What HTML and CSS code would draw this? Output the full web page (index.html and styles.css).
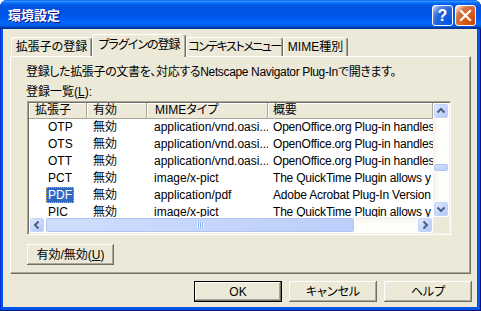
FILE: index.html
```html
<!DOCTYPE html>
<html lang="ja">
  <head>
    <meta charset="utf-8" />
    <title>環境設定</title>
    <link rel="stylesheet" href="styles.css">
  </head>
  <body>
    <div class="window">
      <div class="titlebar">
        <div class="title">環境設定</div>
        <div class="title-buttons">
          <div class="tb-btn tb-help">?</div>
          <div class="tb-btn tb-close">
            <svg width="21" height="21" viewBox="0 0 21 21"><path d="M6 6 L15 15 M15 6 L6 15" stroke="#fff" stroke-width="2.2" stroke-linecap="square"/></svg>
          </div>
        </div>
      </div>

      <div class="client">
        <div class="tabs">
          <div class="tab tab-1">拡張子の登録</div>
          <div class="tab tab-2 active">プラグインの登録</div>
          <div class="tab tab-3">コンテキストメニュー</div>
          <div class="tab tab-4">MIME種別</div>
        </div>

        <div class="panel">
          <p class="desc">登録した拡張子の文書を、対応するNetscape Navigator Plug-Inで開きます。</p>
          <p class="label">登録一覧(<u>L</u>):</p>

          <div class="listbox">
            <div class="lv">
              <div class="lv-row lv-head">
                <div class="cell">拡張子</div>
                <div class="cell">有効</div>
                <div class="cell">MIMEタイプ</div>
                <div class="cell">概要</div>
              </div>
              <div class="lv-row">
                <div class="cell ext"><span>OTP</span></div>
                <div class="cell">無効</div>
                <div class="cell">application/vnd.oasi...</div>
                <div class="cell">OpenOffice.org Plug-in handles</div>
              </div>
              <div class="lv-row">
                <div class="cell ext"><span>OTS</span></div>
                <div class="cell">無効</div>
                <div class="cell">application/vnd.oasi...</div>
                <div class="cell">OpenOffice.org Plug-in handles</div>
              </div>
              <div class="lv-row">
                <div class="cell ext"><span>OTT</span></div>
                <div class="cell">無効</div>
                <div class="cell">application/vnd.oasi...</div>
                <div class="cell">OpenOffice.org Plug-in handles</div>
              </div>
              <div class="lv-row">
                <div class="cell ext"><span>PCT</span></div>
                <div class="cell">無効</div>
                <div class="cell">image/x-pict</div>
                <div class="cell">The QuickTime Plugin allows y</div>
              </div>
              <div class="lv-row">
                <div class="cell ext"><span class="selected">PDF</span></div>
                <div class="cell">無効</div>
                <div class="cell">application/pdf</div>
                <div class="cell">Adobe Acrobat Plug-In Version</div>
              </div>
              <div class="lv-row">
                <div class="cell ext"><span>PIC</span></div>
                <div class="cell">無効</div>
                <div class="cell">image/x-pict</div>
                <div class="cell">The QuickTime Plugin allows y</div>
              </div>
            </div>

            <div class="vscroll">
              <div class="sb-btn">
                <svg width="14" height="14" viewBox="0 0 14 14"><polyline points="3.5,8.5 7,5 10.5,8.5" fill="none" stroke="#4d6185" stroke-width="2"/></svg>
              </div>
              <div class="sb-track v-track">
                <div class="sb-thumb v-thumb"></div>
              </div>
              <div class="sb-btn">
                <svg width="14" height="14" viewBox="0 0 14 14"><polyline points="3.5,5.5 7,9 10.5,5.5" fill="none" stroke="#4d6185" stroke-width="2"/></svg>
              </div>
            </div>

            <div class="hscroll">
              <div class="sb-btn">
                <svg width="14" height="14" viewBox="0 0 14 14"><polyline points="8.5,3.5 5,7 8.5,10.5" fill="none" stroke="#4d6185" stroke-width="2"/></svg>
              </div>
              <div class="sb-track h-track">
                <div class="sb-thumb h-thumb">
                  <div class="grip"></div>
                </div>
              </div>
              <div class="sb-btn">
                <svg width="14" height="14" viewBox="0 0 14 14"><polyline points="5.5,3.5 9,7 5.5,10.5" fill="none" stroke="#4d6185" stroke-width="2"/></svg>
              </div>
            </div>

            <div class="corner"></div>
          </div>

          <button class="btn toggle-btn">有効/無効(<u>U</u>)</button>
        </div>

        <div class="dialog-buttons">
          <button class="btn default">OK</button>
          <button class="btn">キャンセル</button>
          <button class="btn">ヘルプ</button>
        </div>
      </div>
    </div>
  </body>
</html>
```

FILE: styles.css
```css
* {
  box-sizing: border-box;
}

body {
  margin: 0;
  font: 12px/1 "Liberation Sans", "Noto Sans CJK JP", sans-serif;
  font-feature-settings: "palt";
  color: #000;
  background: #fff;
}

.window {
  width: 481px;
  height: 311px;
  display: flex;
  flex-direction: column;
  background: #0055e5;
  border-radius: 7px 7px 0 0;
  box-shadow: inset -1px -1px #00138c, inset 1px 0 #0831d9;
  overflow: hidden;
}

/* title bar */

.titlebar {
  height: 29px;
  display: flex;
  align-items: flex-start;
  padding: 0 5px 0 8px;
  background: linear-gradient(to bottom, #0058ee 0%, #3593ff 4%, #288eff 6%, #127dff 8%, #036ffc 10%, #0262ee 14%, #0057e5 20%, #0054e3 24%, #0055eb 56%, #005bf5 66%, #026afe 76%, #0062ef 86%, #0052d6 92%, #0040ab 94%, #003092 100%);
  border-radius: 7px 7px 0 0;
}

.title {
  margin-top: 7px;
  font: bold 13px/16px "Noto Sans CJK JP", sans-serif;
  color: #fff;
  text-shadow: 1px 1px #0f1089;
}

.title-buttons {
  margin-left: auto;
  margin-top: 5px;
  display: flex;
  gap: 2px;
}

.tb-btn {
  width: 21px;
  height: 21px;
  border: 1px solid #fff;
  border-radius: 3px;
  display: flex;
  align-items: center;
  justify-content: center;
}

.tb-help {
  background: radial-gradient(circle at 90% 90%, #0054e9 0%, #2263d5 55%, #4479e4 70%, #a3bbec 90%, #fff 100%);
  color: #fff;
  font: bold 16px/1 "Liberation Sans", sans-serif;
}

.tb-close {
  background: radial-gradient(circle at 90% 90%, #cc4600 0%, #dc6527 55%, #cd7546 70%, #ffccb2 90%, #fff 100%);
}

.tb-close svg {
  margin: -1px;
}

/* client area */

.client {
  flex: 1;
  margin: 0 4px 4px 3px;
  background: #ece9d8;
  display: flex;
  flex-direction: column;
}

.tabs {
  display: flex;
  align-items: flex-end;
  height: 22px;
  margin: 5px 0 0 8px;
}

.tab {
  height: 19px;
  display: flex;
  align-items: center;
  justify-content: center;
  background: #ece9d8;
  border: 1px solid;
  border-color: #fff #716f64 transparent #fff;
  border-bottom: none;
  border-radius: 3px 3px 0 0;
  box-shadow: inset -1px 0 #aca899;
  white-space: nowrap;
}

.tab.active {
  height: 23px;
  margin-bottom: -1px;
  padding-bottom: 3px;
  position: relative;
  z-index: 1;
}

.tab-1 { width: 81px; }
.tab-2 { width: 94px; letter-spacing: -1px; }
.tab-3 { width: 97px; letter-spacing: -1.5px; }
.tab-4 { width: 65px; }

.panel {
  height: 218px;
  margin: 0 6px 0 7px;
  padding: 7px 0 0 15px;
  border: 1px solid;
  border-color: #fff #716f64 #716f64 #fff;
  box-shadow: inset -1px -1px #aca899;
}

.desc,
.label {
  margin: 0;
  height: 16px;
  line-height: 16px;
  white-space: nowrap;
}

.desc {
  letter-spacing: -0.35px;
}

.label {
  margin-top: 4px;
}

/* list view */

.listbox {
  width: 424px;
  height: 134px;
  margin: 1px 0 0 1px;
  padding: 1px;
  border: 1px solid;
  border-color: #aca899 #fff #fff #aca899;
  box-shadow: inset 1px 1px #716f64, inset -1px -1px #f1efe2;
  background: #fff;
  display: grid;
  grid-template-columns: 1fr 16px;
  grid-template-rows: 1fr 16px;
}

.lv {
  overflow: hidden;
}

.lv-row {
  display: grid;
  grid-template-columns: 58px 60px 121px 165px;
  height: 17px;
}

.lv-row .cell {
  padding-left: 6px;
  line-height: 16px;
  white-space: nowrap;
  overflow: hidden;
}

.lv-row .cell:nth-child(3) {
  padding-left: 7px;
}

.lv-row .cell:last-child {
  padding-left: 5px;
  letter-spacing: -0.2px;
}

.lv-head {
  height: 16px;
}

.lv-head .cell {
  line-height: 15px;
  background: #ece9d8;
  border-right: 1px solid #aca899;
  border-bottom: 1px solid #aca899;
  box-shadow: inset 1px 1px #fff;
}

.lv-head .cell:nth-child(3) {
  padding-left: 8px;
}

.lv-row .ext {
  padding-left: 17px;
}

.ext span {
  display: inline-block;
  height: 16px;
  line-height: 14px;
  padding: 0 1px;
  border: 1px dotted transparent;
  vertical-align: top;
}

.ext span.selected {
  background: #316ac5;
  color: #fff;
  border-color: #e8a848;
}

/* scrollbars */

.vscroll,
.hscroll {
  display: flex;
}

.vscroll {
  flex-direction: column;
}

.sb-btn {
  width: 16px;
  height: 16px;
  flex: none;
  display: flex;
  align-items: center;
  justify-content: center;
  border: 1px solid #fff;
  border-radius: 3px;
  background: linear-gradient(135deg, #e5edfd, #c2d4fb 60%, #b4c8f6);
  box-shadow: inset 0 0 0 1px #c3d3fd;
}

.sb-track {
  flex: 1;
  display: flex;
}

.v-track {
  flex-direction: column;
  background: linear-gradient(to right, #f3f1ec, #fefefb 40%);
}

.h-track {
  background: linear-gradient(to bottom, #f3f1ec, #fefefb 40%);
}

.sb-thumb {
  border: 1px solid #fff;
  border-radius: 3px;
  background: linear-gradient(135deg, #d0ddfd, #bccefa);
  box-shadow: inset 0 0 0 1px #b0c4f4;
}

.v-thumb {
  height: 9px;
  margin-top: 44px;
}

.h-thumb {
  width: 310px;
  display: flex;
  align-items: center;
  justify-content: center;
}

.grip {
  width: 7px;
  height: 6px;
  background: repeating-linear-gradient(to right, #eef4fe 0 1px, #8cb0f8 1px 2px);
}

.corner {
  background: #ece9d8;
}

/* buttons */

.btn {
  font: inherit;
  font-feature-settings: "palt";
  color: #000;
  height: 21px;
  width: 88px;
  padding: 0;
  border: none;
  background: #ece9d8;
  box-shadow: inset -1px -1px #716f64, inset 1px 1px #fff, inset -2px -2px #aca899;
}

.btn.default {
  border: 1px solid #000;
}

.toggle-btn {
  width: 87px;
  margin: 9px 0 0 1px;
}

.dialog-buttons {
  display: flex;
  justify-content: flex-end;
  gap: 7px;
  margin-top: 7px;
  padding-right: 5px;
}
```
